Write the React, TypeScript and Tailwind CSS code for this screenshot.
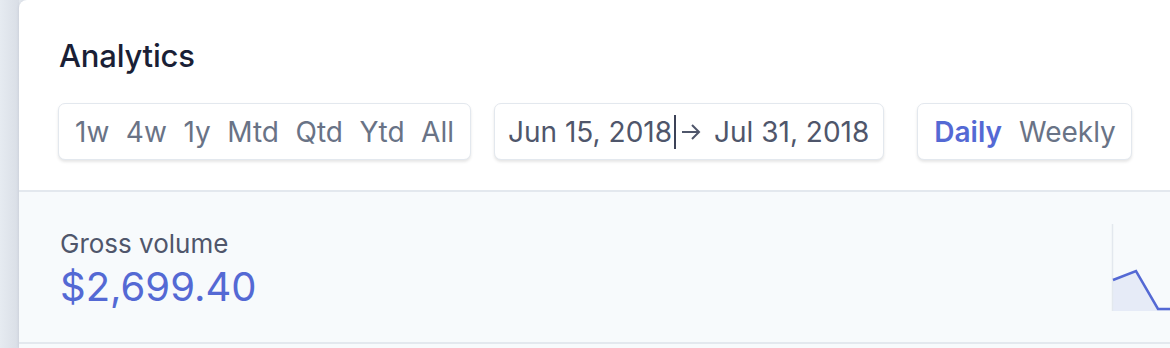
import React from 'react';

const presets = ['1w', '4w', '1y', 'Mtd', 'Qtd', 'Ytd', 'All'];

const Sparkline: React.FC = () => (
  <svg width="60" height="150" viewBox="0 0 60 150" className="shrink-0 block">
    <path d="M2 88 L25 79 L47 117 L60 117 L60 119 L2 119 Z" fill="#e6ebf7" />
    <line x1="1.5" y1="32" x2="1.5" y2="119" stroke="#e3e8ee" strokeWidth="1.5" />
    <polyline points="2,88 25,79 47,117 60,117" fill="none" stroke="#5469d4" strokeWidth="2.5" />
  </svg>
);

const App: React.FC = () => {
  return (
    <div
      className="flex h-[348px] w-[1170px] overflow-hidden bg-[#e3e8ee]"
      style={{ fontFamily: 'Inter, "Noto Sans", sans-serif' }}
    >
      <div className="w-[19px] shrink-0 bg-gradient-to-r from-[#e6ebf1] to-[#d9dee6]" />
      <div className="flex-1 flex flex-col bg-white rounded-tl-[8px] shadow-[0_0_3px_rgba(50,50,93,0.12)]">
        {/* header */}
        <div className="px-[39px] pt-[37px] pb-[30px] border-b-2 border-[#e3e8ee]">
          <h1 className="pl-[1px] text-[31px] leading-[38px] font-medium text-[#1a1f36] tracking-[-0.2px]">Analytics</h1>
          <div className="flex items-center mt-[28px] whitespace-nowrap">
            <div className="shrink-0 h-[57px] w-[413px] flex items-center justify-between px-[16px] rounded-[7px] bg-white border border-[#e3e8ee] shadow-[0_2px_3px_rgba(0,0,0,0.1)] text-[28px] text-[#697386]">
              {presets.map((p) => (
                <span key={p}>{p}</span>
              ))}
            </div>
            <div className="shrink-0 ml-[23px] h-[57px] flex items-center pl-[13px] pr-[14px] rounded-[7px] bg-white border border-[#e3e8ee] shadow-[0_2px_3px_rgba(0,0,0,0.1)] text-[28px] text-[#4f566b]">
              <span className="border-r-2 border-[#3c4257] pr-[2px] leading-[34px]">Jun 15, 2018</span>
              <svg width="20" height="20" viewBox="0 0 20 20" className="shrink-0 ml-[5px] mr-[13px]">
                <path d="M1 10 H18 M11 3 L18 10 L11 17" fill="none" stroke="#4f566b" strokeWidth="2" />
              </svg>
              <span>Jul 31, 2018</span>
            </div>
            <div className="shrink-0 ml-[33px] h-[57px] flex items-center pl-[16px] pr-[15px] gap-[17px] rounded-[7px] bg-white border border-[#e3e8ee] shadow-[0_2px_3px_rgba(0,0,0,0.1)] text-[28px]">
              <span className="font-semibold text-[#5469d4]">Daily</span>
              <span className="text-[#697386]">Weekly</span>
            </div>
          </div>
        </div>
        {/* metric */}
        <div className="flex h-[152px] bg-[#f7fafc] border-b-2 border-[#e3e8ee]">
          <div className="flex-1 pl-[41px] pt-[37px]">
            <div className="text-[26px] leading-[30px] text-[#4f566b]">Gross volume</div>
            <div className="mt-[5px] text-[40px] leading-[46px] text-[#5469d4]">$2,699.40</div>
          </div>
          <Sparkline />
        </div>
        <div className="flex-1 bg-[#f7fafc]" />
      </div>
    </div>
  );
};

export default App;
